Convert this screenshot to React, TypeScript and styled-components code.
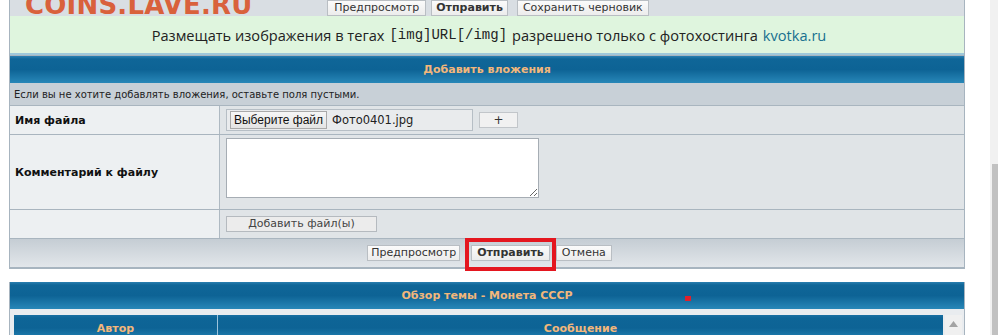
import React from 'react';
import styled, { createGlobalStyle } from 'styled-components';

const GlobalStyle = createGlobalStyle`
  html, body {
    margin: 0;
    padding: 0;
    background: #ffffff;
    overflow: hidden;
  }
  body {
    font-family: "DejaVu Sans", Verdana, sans-serif;
    font-size: 11px;
    color: #222;
  }
`;

const Page = styled.div`
  position: relative;
  width: 998px;
  height: 335px;
  overflow: hidden;
  padding: 0 0 0 9px;
  box-sizing: border-box;
`;

const Logo = styled.div`
  position: absolute;
  left: 25px;
  top: -10px;
  font-family: "DejaVu Sans", Verdana, sans-serif;
  font-weight: bold;
  font-size: 26px;
  line-height: 30px;
  color: #d9613c;
  letter-spacing: 0.2px;
  pointer-events: none;
`;

const Panel = styled.div`
  width: 956px;
  border: 1px solid #a7b4bf;
  border-top: none;
  box-sizing: border-box;
  background: #e1e5e8;
`;

const TopBar = styled.div`
  height: 16px;
  background: #d9dee3;
  display: flex;
  justify-content: center;
  align-items: flex-start;
  padding-left: 6px;
`;

const Btn = styled.button<{ $bold?: boolean; $gap?: number; $pad?: number }>`
  font-family: "DejaVu Sans", Verdana, sans-serif;
  font-size: 11px;
  font-weight: ${(p) => (p.$bold ? 'bold' : 'normal')};
  color: #333;
  background: linear-gradient(#fbfbfb, #ececec);
  border: 1px solid #b9bec3;
  height: 16px;
  line-height: 14px;
  padding: 0 ${(p) => p.$pad ?? 4}px;
  margin: 0 ${(p) => p.$gap ?? 3}px;
  box-sizing: border-box;
  white-space: nowrap;
  cursor: pointer;
`;

const Notice = styled.div`
  height: 37px;
  background: #dff5de;
  border-bottom: 2px solid #9fc8da;
  display: flex;
  justify-content: center;
  align-items: center;
  font-family: "Open Sans", "Noto Sans", sans-serif;
  font-size: 14.6px;
  color: #222;
  padding-left: 4px;
  white-space: nowrap;
`;

const Mono = styled.span`
  font-family: "Liberation Mono", "DejaVu Sans Mono", monospace;
  font-size: 14px;
  margin: 0 5px;
`;

const Link = styled.a`
  color: #17708f;
  text-decoration: none;
  margin-left: 5px;
`;

const Header = styled.div<{ $h?: number }>`
  height: ${(p) => p.$h ?? 27}px;
  background: linear-gradient(#2a7fb0 0px, #0f6698 3px, #0d6395 50%, #2887b8 100%);
  color: #f2b77b;
  font-weight: bold;
  font-size: 11px;
  display: flex;
  align-items: center;
  justify-content: center;
`;

const InfoRow = styled.div`
  height: 22px;
  background: #c8d0d7;
  font-size: 10px;
  color: #222;
  display: flex;
  align-items: center;
  padding-left: 4px;
`;

const Row = styled.div<{ $h: number }>`
  display: grid;
  grid-template-columns: 210px 1fr;
  height: ${(p) => p.$h}px;
  border-top: 1px solid #a9b5bf;
`;

const LabelCell = styled.div`
  background: #edf0f2;
  border-right: 1px solid #aeb9c2;
  display: flex;
  align-items: center;
  padding-left: 5px;
  font-weight: bold;
  font-size: 11px;
  color: #111;
`;

const FieldCell = styled.div`
  background: #e0e4e7;
  display: flex;
  align-items: center;
  padding-left: 6px;
  gap: 6px;
`;

const FileBox = styled.div`
  width: 247px;
  height: 22px;
  box-sizing: border-box;
  border: 1px solid #b6bec5;
  background: #e9ebed;
  display: flex;
  align-items: center;
  padding-left: 3px;
  gap: 5px;
`;

const FileBtn = styled.button`
  font-family: "Liberation Sans", Arial, sans-serif;
  font-size: 12px;
  color: #111;
  height: 18px;
  width: 97px;
  padding: 0;
  border: 1px solid #a9a9a9;
  background: linear-gradient(#f6f6f6, #e4e4e4);
  line-height: 16px;
  white-space: nowrap;
`;

const FileName = styled.span`
  font-size: 11.5px;
  color: #222;
`;

const PlusBtn = styled(Btn)`
  width: 39px;
  margin: 0;
  font-size: 12px;
  background: #f1f1f1;
  border-color: #c2c6ca;
`;

const Comment = styled.textarea`
  width: 313px;
  height: 60px;
  box-sizing: border-box;
  border: 1px solid #a6adb4;
  background: #ffffff;
  resize: both;
  margin-top: -9px;
`;

const WideBtn = styled(Btn)`
  width: 151px;
  margin: 0;
  background: #ececec;
  color: #444;
  border-color: #b5babf;
`;

const Footer = styled.div`
  height: 28px;
  border-top: 1px solid #a9b5bf;
  border-bottom: 1px solid #a7b4bf;
  background: linear-gradient(#c5cdd4, #e2e6ea);
  display: flex;
  justify-content: center;
  align-items: center;
  padding-left: 2px;
`;

const Highlight = styled.span`
  position: relative;
  display: inline-flex;
  margin: 0 6px 0 8px;
  &::after {
    content: '';
    position: absolute;
    left: -6px;
    right: -6px;
    top: -7px;
    bottom: -10px;
    border: 4px solid #e4161f;
    pointer-events: none;
  }
`;

const Second = styled.div`
  margin-top: 13px;
  width: 956px;
  border-left: 1px solid #a7b4bf;
  border-right: 1px solid #a7b4bf;
  box-sizing: border-box;
  background: #e9ecef;
`;

const Inner = styled.div`
  padding: 6px 0 0 4px;
  display: flex;
`;

const InnerTable = styled.div`
  width: 929px;
  display: grid;
  grid-template-columns: 204px 1fr;
`;

const ColHead = styled.div<{ $first?: boolean }>`
  height: 26px;
  background: linear-gradient(#1a6fa2 0px, #0e6597 3px, #0d6395 50%, #2585b7 100%);
  color: #f2b77b;
  font-weight: bold;
  font-size: 11px;
  display: flex;
  align-items: center;
  justify-content: center;
  border-right: ${(p) => (p.$first ? '1px solid #9cc3dc' : 'none')};
`;

const InnerScroll = styled.div`
  width: 17px;
  margin-left: 2px;
  background: #f0f0f0;
  display: flex;
  justify-content: center;
  padding-top: 6px;
`;

const Dot = styled.div`
  position: absolute;
  left: 685px;
  top: 296px;
  width: 6px;
  height: 5px;
  background: #e0202c;
`;

const PageScroll = styled.div`
  position: absolute;
  right: 0;
  top: 0;
  width: 8px;
  height: 335px;
  background: #f1f1f1;
  &::after {
    content: '';
    position: absolute;
    left: 2px;
    right: 0;
    top: 164px;
    bottom: 0;
    background: #c1c1c1;
  }
`;

export default function App() {
  return (
    <>
      <GlobalStyle />
      <Page>
        <Panel>
          <TopBar>
            <Btn $pad={6}>Предпросмотр</Btn>
            <Btn $bold $gap={2} $pad={4}>Отправить</Btn>
            <Btn $gap={7} $pad={5}>Сохранить черновик</Btn>
          </TopBar>
          <Notice>
            Размещать изображения в тегах<Mono>[img]URL[/img]</Mono>разрешено только с фотохостинга
            <Link href="#">kvotka.ru</Link>
          </Notice>
        </Panel>
        <Panel>
          <Header>Добавить вложения</Header>
          <InfoRow>Если вы не хотите добавлять вложения, оставьте поля пустыми.</InfoRow>
          <Row $h={28}>
            <LabelCell>Имя файла</LabelCell>
            <FieldCell>
              <FileBox>
                <FileBtn>Выберите файл</FileBtn>
                <FileName>Фото0401.jpg</FileName>
              </FileBox>
              <PlusBtn>+</PlusBtn>
            </FieldCell>
          </Row>
          <Row $h={74}>
            <LabelCell>Комментарий к файлу</LabelCell>
            <FieldCell>
              <Comment />
            </FieldCell>
          </Row>
          <Row $h={28}>
            <LabelCell />
            <FieldCell>
              <WideBtn>Добавить файл(ы)</WideBtn>
            </FieldCell>
          </Row>
          <Footer>
            <Btn $pad={3}>Предпросмотр</Btn>
            <Highlight>
              <Btn $bold $gap={0} $pad={5}>Отправить</Btn>
            </Highlight>
            <Btn $pad={5} $gap={0}>Отмена</Btn>
          </Footer>
        </Panel>
        <Second>
          <Header>Обзор темы - Монета СССР</Header>
          <Inner>
            <InnerTable>
              <ColHead $first>Автор</ColHead>
              <ColHead>Сообщение</ColHead>
            </InnerTable>
            <InnerScroll>
              <svg width="9" height="6" viewBox="0 0 9 6">
                <path d="M4.5 0 L9 6 L0 6 Z" fill="#a3a3a3" />
              </svg>
            </InnerScroll>
          </Inner>
        </Second>
        <Dot />
        <Logo>COINS.LAVE.RU</Logo>
        <PageScroll />
      </Page>
    </>
  );
}
